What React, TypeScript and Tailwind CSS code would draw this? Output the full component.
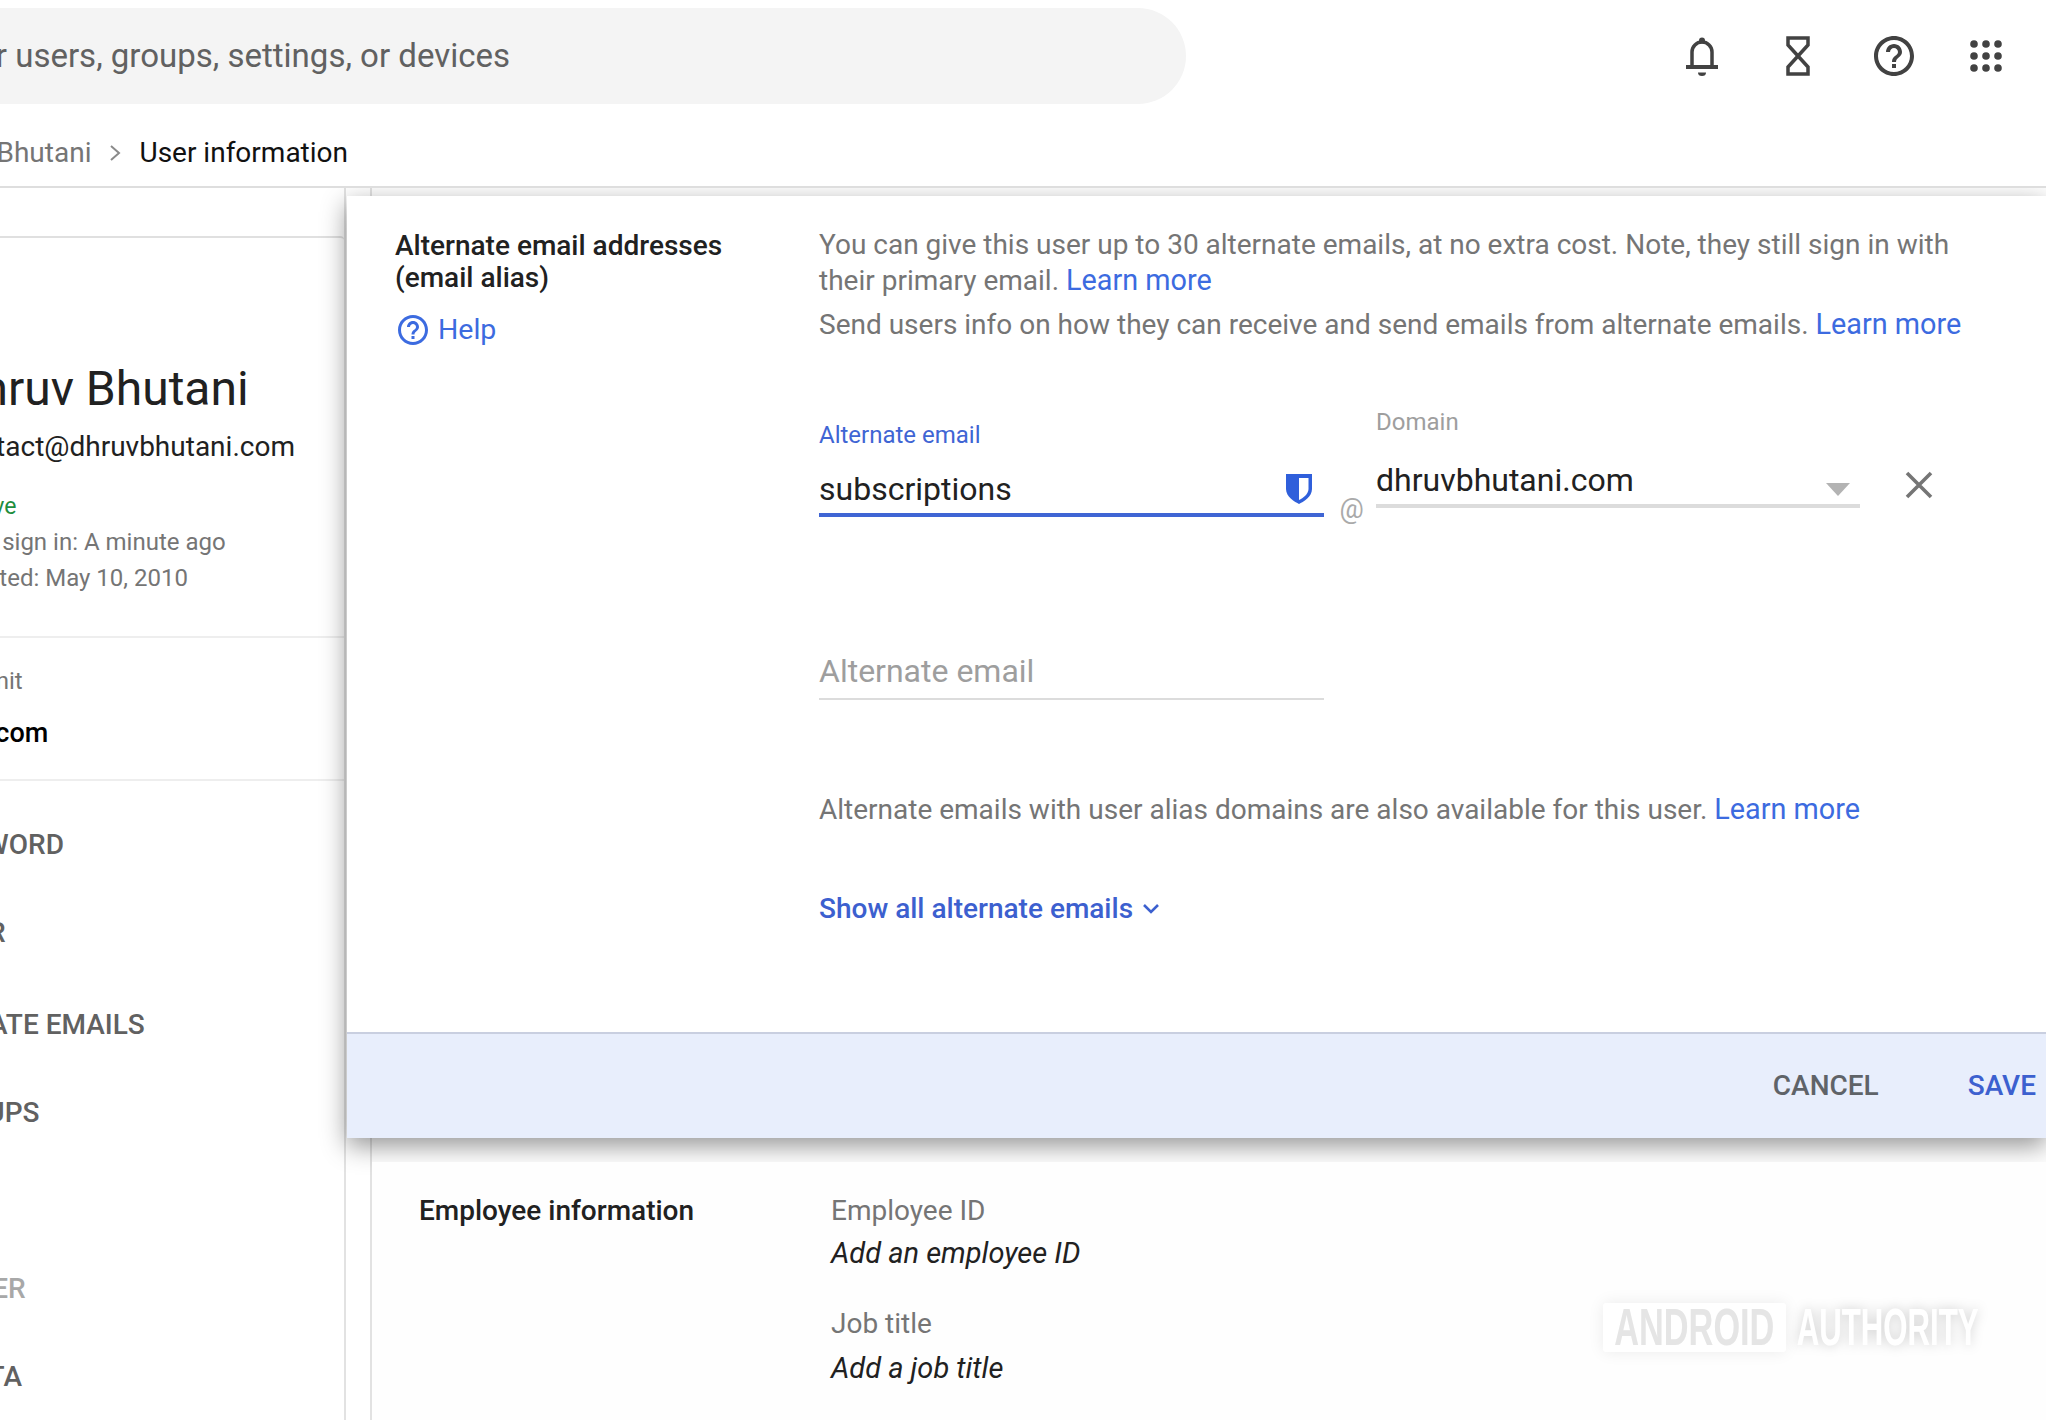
import React from "react";

function Bell() {
  return (
    <svg width="32" height="39" viewBox="0 0 32 39" fill="none">
      <path d="M6 29V15a10 10 0 0 1 20 0v14" stroke="#424242" strokeWidth="3.5" />
      <rect x="0" y="28" width="32" height="4" fill="#424242" />
      <circle cx="16" cy="3.5" r="3" fill="#424242" />
      <path d="M12 35.5h8a4 3.5 0 0 1-8 0z" fill="#424242" />
    </svg>
  );
}
function Hourglass() {
  return (
    <svg width="24" height="40" viewBox="0 0 24 40" fill="none">
      <path d="M2 2H22V9L2 31V38H22V31L2 9Z" stroke="#424242" strokeWidth="3.5" />
    </svg>
  );
}
function HelpIcon({ size, color }: { size: number; color: string }) {
  return (
    <svg width={size} height={size} viewBox="0 0 24 24" fill={color}>
      <path d="M11 18h2v-2h-2v2zm1-16C6.48 2 2 6.48 2 12s4.48 10 10 10 10-4.48 10-10S17.52 2 12 2zm0 18c-4.41 0-8-3.59-8-8s3.59-8 8-8 8 3.59 8 8-3.59 8-8 8zm0-14c-2.21 0-4 1.79-4 4h2c0-1.1.9-2 2-2s2 .9 2 2c0 2-3 1.75-3 5h2c0-2.25 3-2.5 3-5 0-2.21-1.79-4-4-4z" />
    </svg>
  );
}
function Apps() {
  const pts = [4, 16, 28];
  return (
    <svg width="32" height="32" viewBox="0 0 32 32" fill="#424242">
      {pts.map((y) => pts.map((x) => <circle key={`${x}-${y}`} cx={x} cy={y} r="3.8" />))}
    </svg>
  );
}
function Shield() {
  return (
    <svg width="26" height="30" viewBox="0 0 26 30">
      <path d="M0 0H26V15C26 23 17 28 13 30C9 28 0 23 0 15Z" fill="#2f5fdb" />
      <path d="M13 4H22.5V15C22.5 20 17 24 13 26Z" fill="#fff" />
    </svg>
  );
}

const actions = [
  { t: "RESET PASSWORD", c: "mt-[46px] text-[#616161]" },
  { t: "UPDATE USER", c: "mt-[52px] text-[#616161]" },
  { t: "ADD ALTERNATE EMAILS", c: "mt-[56px] text-[#616161]" },
  { t: "ADD TO GROUPS", c: "mt-[52px] text-[#616161]" },
  { t: "SUSPEND USER", c: "mt-[140px] text-[#a8a8a8]" },
  { t: "RESTORE DATA", c: "mt-[52px] text-[#616161]" },
];

export default function App() {
  return (
    <div className="relative w-[2046px] h-[1420px] overflow-hidden bg-white flex flex-col font-['Roboto',sans-serif]">
      <div className="relative z-20 bg-white shrink-0">
        <div className="h-[112px] flex items-start">
          <div className="mt-[8px] w-[1186px] h-[96px] bg-[#f4f4f4] rounded-r-[48px] overflow-hidden flex items-center shrink-0">
            <span className="-ml-[144px] text-[33px] text-[#616161] whitespace-nowrap">Search for users, groups, settings, or devices</span>
          </div>
          <div className="flex-1 h-full flex items-center justify-end pr-[16.5px]">
            <div className="w-[96px] flex justify-center"><Bell /></div>
            <div className="w-[96px] flex justify-center"><Hourglass /></div>
            <div className="w-[96px] flex justify-center"><HelpIcon size={48} color="#424242" /></div>
            <div className="w-[88px] flex justify-center"><Apps /></div>
          </div>
        </div>
        <div className="h-[76px] border-b-2 border-[#dedede] flex items-start pt-[23px] overflow-hidden">
          <span className="-ml-[3.5px] text-[28px] leading-[36px] text-[#757575] whitespace-nowrap">Bhutani</span>
          <svg className="ml-[18px] mt-[9px]" width="12" height="18" viewBox="0 0 12 18" fill="none">
            <path d="M2 2l8 7-8 7" stroke="#8a8a8a" strokeWidth="2" />
          </svg>
          <span className="ml-[18px] text-[28px] leading-[36px] text-[#111] whitespace-nowrap">User information</span>
        </div>
      </div>

      <div className="relative flex-1 flex">
        <div className="w-[346px] shrink-0 border-r-2 border-[#e2e2e2] pt-[48px] overflow-hidden">
          <div className="border-t-2 border-[#e0e0e0] rounded-tr-[4px]">
            <div className="-ml-[50px] whitespace-nowrap pt-[123px] h-[398px]">
              <div className="text-[48px] leading-[56px] text-[#212121]">Dhruv Bhutani</div>
              <div className="mt-[12px] text-[28px] leading-[36px] text-[#212121]">contact@dhruvbhutani.com</div>
              <div className="mt-[26px] ml-[3px] text-[23px] leading-[32px] text-[#1e8e3e]">Active</div>
              <div className="mt-[0.5px] text-[24px] leading-[36px] text-[#757575]">Last sign in: A minute ago</div>
              <div className="text-[24px] leading-[36px] text-[#757575]">Created: May 10, 2010</div>
            </div>
            <div className="border-t-2 border-[#eeeeee] h-[143px]">
              <div className="whitespace-nowrap pt-[27px]">
                <div className="-ml-[178px] text-[24px] leading-[32px] text-[#757575]">Organizational unit</div>
                <div className="-ml-[171px] mt-[18px] text-[27px] leading-[36px] font-medium text-black">dhruvbhutani.com</div>
              </div>
            </div>
            <div className="border-t-2 border-[#eeeeee]">
              <div className="-ml-[174px] whitespace-nowrap">
                {actions.map((a) => (
                  <div key={a.t} className={`text-[28px] leading-[36px] font-medium ${a.c}`}>{a.t}</div>
                ))}
              </div>
            </div>
          </div>
        </div>
        <div className="ml-[24px] flex-1 border-l-2 border-[#e2e2e2] pt-[974px]">
          <div className="relative z-20 h-[300px] bg-[#fefefe] flex pt-[31px] pl-[47px]">
            <div className="w-[412px] text-[28px] leading-[36px] font-medium text-[#212121]">Employee information</div>
            <div className="text-[28px] leading-[36px]">
              <div className="text-[#757575]">Employee ID</div>
              <div className="mt-[6px] italic text-[29px] text-[#212121]">Add an employee ID</div>
              <div className="mt-[35px] text-[#757575]">Job title</div>
              <div className="mt-[8px] italic text-[29px] text-[#212121]">Add a job title</div>
            </div>
          </div>
        </div>

        <div className="absolute z-10 left-[347px] top-[8px] right-0 h-[942px] bg-white shadow-[0_8px_24px_rgba(0,0,0,0.42)] flex flex-col">
          <div className="flex-1 flex pt-[31px] pl-[48px]">
            <div className="w-[424px] shrink-0">
              <div className="mt-[3px] text-[28px] leading-[32px] font-medium text-[#212121]">
                Alternate email addresses<br />(email alias)
              </div>
              <div className="mt-[18px] flex items-center text-[#3c6be0] text-[28.5px] leading-[36px]">
                <HelpIcon size={36} color="#3c6be0" />
                <span className="ml-[7px]">Help</span>
              </div>
            </div>
            <div className="flex-1 text-[28px] leading-[36px] text-[#757575]">
              <p className="w-[1140px]">You can give this user up to 30 alternate emails, at no extra cost. Note, they still sign in with their primary email. <span className="text-[28.8px] leading-[20px] text-[#3c6be0]">Learn more</span></p>
              <p className="mt-[7.5px] whitespace-nowrap">Send users info on how they can receive and send emails from alternate emails. <span className="text-[28.8px] leading-[20px] text-[#3c6be0]">Learn more</span></p>

              <div className="mt-[65.5px] flex items-start">
                <div className="w-[505px] pt-[13px]">
                  <div className="text-[24px] leading-[28px] text-[#3f65d4]">Alternate email</div>
                  <div className="mt-[20px] h-[40px] flex items-center justify-between pr-[12px]">
                    <span className="text-[32px] leading-[40px] text-[#212121]">subscriptions</span>
                    <Shield />
                  </div>
                  <div className="mt-[4px] h-[4px] bg-[#3f65d4]" />
                </div>
                <div className="w-[52px] text-center pl-[3px] pt-[86px] text-[27px] leading-[30px] text-[#aaaaaa]">@</div>
                <div className="w-[484px]">
                  <div className="text-[24px] leading-[28px] text-[#9e9e9e]">Domain</div>
                  <div className="mt-[24px] h-[40px] flex items-start justify-between pr-[10px]">
                    <span className="text-[32px] leading-[40px] text-[#212121]">dhruvbhutani.com</span>
                    <svg className="mt-[23px]" width="24" height="13" viewBox="0 0 24 13" fill="#b3b3b3"><path d="M0 0H24L12 13Z" /></svg>
                  </div>
                  <div className="mt-[4px] h-[4px] bg-[#dcdcdc]" />
                </div>
                <svg className="ml-[45px] mt-[63px]" width="28" height="28" viewBox="0 0 28 28" fill="none">
                  <path d="M2 2l24 24M26 2L2 26" stroke="#757575" strokeWidth="3.6" />
                </svg>
              </div>

              <div className="mt-[127px] w-[505px] text-[32px] leading-[40px] text-[#9e9e9e]">Alternate email</div>
              <div className="mt-[7px] w-[505px] h-[2px] bg-[#dcdcdc]" />

              <p className="mt-[92px] whitespace-nowrap">Alternate emails with user alias domains are also available for this user. <span className="text-[28.8px] leading-[20px] text-[#3c6be0]">Learn more</span></p>

              <div className="mt-[62.5px] flex items-center text-[#3c60cf] font-medium">
                <span>Show all alternate emails</span>
                <svg className="ml-[9px]" width="18" height="12" viewBox="0 0 18 12" fill="none"><path d="M2 2l7 7 7-7" stroke="#3c60cf" strokeWidth="2.6" /></svg>
              </div>
            </div>
          </div>
          <div className="h-[106px] border-t-2 border-[#c9cfe0] bg-[#e8eefc] flex items-center justify-end pr-[10px] text-[28px] leading-[36px] font-medium">
            <span className="text-[#5f6368]">CANCEL</span>
            <span className="ml-[89px] text-[#3c60cf]">SAVE</span>
          </div>
        </div>
      </div>

      <div className="absolute z-30 left-[1603px] top-[1303px] flex items-center h-[49px] font-['Liberation_Sans',sans-serif] font-bold text-[52px] leading-[49px] whitespace-nowrap">
        <div className="w-[183px] h-[49px] bg-white rounded-[3px] shadow-[0_0_16px_rgba(0,0,0,0.08)] flex items-center justify-center text-[#e5e5e5]">
          <span className="inline-block scale-x-[0.66]">ANDROID</span>
        </div>
        <div className="ml-[11px] w-[181px] flex justify-center text-white drop-shadow-[0_0_6px_rgba(0,0,0,0.2)]">
          <span className="inline-block scale-x-[0.6]">AUTHORITY</span>
        </div>
      </div>
    </div>
  );
}
